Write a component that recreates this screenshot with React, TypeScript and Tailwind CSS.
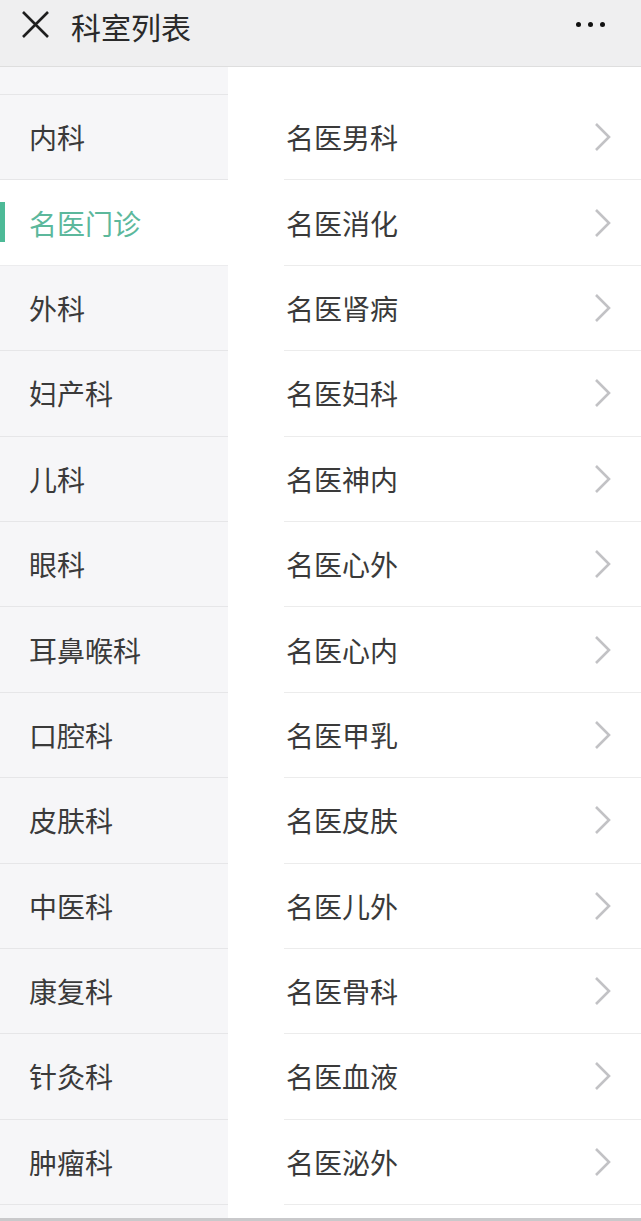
import React from "react";

const left = ["内科", "名医门诊", "外科", "妇产科", "儿科", "眼科", "耳鼻喉科", "口腔科", "皮肤科", "中医科", "康复科", "针灸科", "肿瘤科"];
const right = ["名医男科", "名医消化", "名医肾病", "名医妇科", "名医神内", "名医心外", "名医心内", "名医甲乳", "名医皮肤", "名医儿外", "名医骨科", "名医血液", "名医泌外"];

const font = { fontFamily: '"Noto Sans CJK SC", "Noto Sans", sans-serif' };

export default function App() {
  return (
    <div className="w-[641px] h-[1221px] bg-white flex flex-col overflow-hidden" style={font}>
      <div className="h-[67px] shrink-0 bg-[#efeff0] border-b border-[#dedede] flex items-start pl-[21px]">
        <svg width="30" height="30" viewBox="0 0 30 30" className="mt-[10px]">
          <path d="M2 2 L27 27 M27 2 L2 27" stroke="#1e1e1e" strokeWidth="2.6" fill="none" />
        </svg>
        <div className="ml-[20px] mt-[11px] text-[30px] leading-none text-[#2a2a2a]">科室列表</div>
        <div className="ml-auto mr-[36px] mt-[22px] flex gap-[7px] items-center">
          <span className="w-[5px] h-[5px] rounded-full bg-[#111]" />
          <span className="w-[5px] h-[5px] rounded-full bg-[#111]" />
          <span className="w-[5px] h-[5px] rounded-full bg-[#111]" />
        </div>
      </div>
      <div className="flex flex-1 min-h-0">
        <div className="w-[228px] shrink-0 bg-[#f6f6f8] flex flex-col">
          <div className="h-[28px] border-b border-[#e6e6e8]" />
          {left.map((t, i) => {
            const sel = i === 1;
            return (
              <div
                key={t}
                className={
                  sel
                    ? "relative h-[85.4px] flex items-center pl-[29px] bg-white border-b border-[#ececee]"
                    : "relative h-[85.4px] flex items-center pl-[29px] border-b border-[#e6e6e8]"
                }
              >
                {sel && <div className="absolute left-0 top-[22px] w-[5px] h-[40px] bg-[#4dba97]" />}
                <span className={sel ? "text-[28px] text-[#5cb89c] leading-none" : "text-[28px] text-[#3a3a3a] leading-none"}>{t}</span>
              </div>
            );
          })}
        </div>
        <div className="flex-1 flex flex-col bg-white">
          <div className="h-[28px]" />
          {right.map((t) => (
            <div key={t} className="h-[85.4px] ml-[56px] border-b border-[#ececec] flex items-center pl-[2px]">
              <span className="text-[28px] text-[#3a3a3a] leading-none">{t}</span>
              <svg width="20" height="32" viewBox="0 0 20 32" className="ml-auto mr-[28px]">
                <path d="M3 3 L16 16 L3 29" stroke="#c2c2c5" strokeWidth="2.6" fill="none" />
              </svg>
            </div>
          ))}
        </div>
      </div>
      <div className="h-[3px] shrink-0 bg-[#c9c9cb]" />
    </div>
  );
}
